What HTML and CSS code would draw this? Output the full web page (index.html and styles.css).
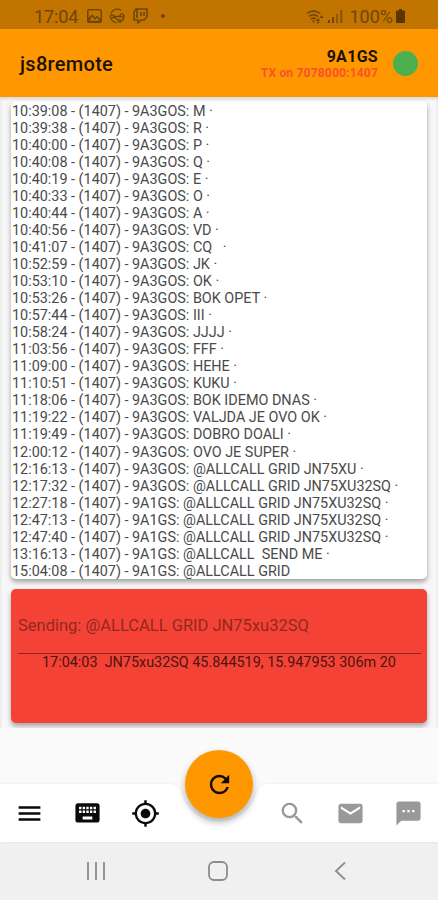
FILE: index.html
```
<!DOCTYPE html>
<html lang="en">
<head>
    <meta charset="UTF-8">
    <meta name="viewport" content="width=device-width, initial-scale=1.0">
    <title>js8remote</title>
    <link rel="stylesheet" href="styles.css">
</head>
<body>

    <!-- Status bar -->
    <div class="status">
        <span class="clock">17:04</span>
        <svg class="s-image" width="15" height="14" viewBox="0 0 16 15"><path fill="currentColor" fill-rule="evenodd" d="M2 0h12a2 2 0 0 1 2 2v11a2 2 0 0 1-2 2H2a2 2 0 0 1-2-2V2a2 2 0 0 1 2-2zM1.600 1.600v8l4-4 3 3.500 2-2 3.800 3.500v-9zM2.500 12.500h11l-3-3-2 2-3-3.500z"/></svg>
        <svg class="s-sync" width="16" height="16" viewBox="0 0 16 16" fill="none" stroke="currentColor" stroke-width="1.300"><path d="M2 5.500a6.500 6.500 0 0 1 10-3M14.800 7a6.500 6.500 0 0 1-4 7M7.500 14.500A6.500 6.500 0 0 1 2 11M5 8.500h6M5 9l5 3.500"/><circle cx="3" cy="8.500" r="1.700"/><circle cx="12.800" cy="7.500" r="1.700"/><circle cx="10.500" cy="13" r="1.200"/></svg>
        <svg class="s-twitch" width="15" height="16" viewBox="0 0 15 16" fill="none" stroke="currentColor" stroke-width="1.600"><path d="M3 1h11v8l-3 3H8l-3 3v-3H1V4zM4 1v9M8 4v4M11 4v4"/></svg>
        <span class="dot"></span>
        <svg class="s-wifi" width="18" height="15" viewBox="0 0 18 15" fill="none" stroke="currentColor" stroke-width="1.600"><path d="M1 4.500a10 10 0 0 1 13 0M3 7.500a7 7 0 0 1 9 0M5 10.200a4 4 0 0 1 5 0"/><path fill="currentColor" stroke="none" d="M6 11.500h3L7.500 14zM10 12l2-3 2 3zM13.500 9h4l-2-3zM10.500 12.500h3l-1.500 2.500z"/></svg>
        <svg class="s-signal" width="15" height="13" viewBox="0 0 15 13" fill="currentColor"><path d="M0 10h2v3H0zM4 7h2v6H4z"/><path opacity=".6" d="M8 4h2v9H8zM12 0h2.500v13H12z"/></svg>
        <span class="percent">100%</span>
        <svg class="s-battery" width="9" height="14" viewBox="0 0 9 14"><path fill="currentColor" d="M3 0h3v1.500h2a1 1 0 0 1 1 1V13a1 1 0 0 1-1 1H1a1 1 0 0 1-1-1V2.500a1 1 0 0 1 1-1h2z"/></svg>
    </div>

    <!-- App bar -->
    <header class="header">
        <h1 class="title">js8remote</h1>
        <div class="station">
            <div class="callsign">9A1GS</div>
            <div class="tx">TX on 7078000:1407</div>
        </div>
        <div class="online"></div>
    </header>

    <main class="content">
        <!-- Messages -->
        <div class="card log">
            <div>10:39:08 - (1407) - 9A3GOS: M ·</div>
            <div>10:39:38 - (1407) - 9A3GOS: R ·</div>
            <div>10:40:00 - (1407) - 9A3GOS: P ·</div>
            <div>10:40:08 - (1407) - 9A3GOS: Q ·</div>
            <div>10:40:19 - (1407) - 9A3GOS: E ·</div>
            <div>10:40:33 - (1407) - 9A3GOS: O ·</div>
            <div>10:40:44 - (1407) - 9A3GOS: A ·</div>
            <div>10:40:56 - (1407) - 9A3GOS: VD ·</div>
            <div>10:41:07 - (1407) - 9A3GOS: CQ   ·</div>
            <div>10:52:59 - (1407) - 9A3GOS: JK ·</div>
            <div>10:53:10 - (1407) - 9A3GOS: OK ·</div>
            <div>10:53:26 - (1407) - 9A3GOS: BOK OPET ·</div>
            <div>10:57:44 - (1407) - 9A3GOS: III ·</div>
            <div>10:58:24 - (1407) - 9A3GOS: JJJJ ·</div>
            <div>11:03:56 - (1407) - 9A3GOS: FFF ·</div>
            <div>11:09:00 - (1407) - 9A3GOS: HEHE ·</div>
            <div>11:10:51 - (1407) - 9A3GOS: KUKU ·</div>
            <div>11:18:06 - (1407) - 9A3GOS: BOK IDEMO DNAS ·</div>
            <div>11:19:22 - (1407) - 9A3GOS: VALJDA JE OVO OK ·</div>
            <div>11:19:49 - (1407) - 9A3GOS: DOBRO DOALI ·</div>
            <div>12:00:12 - (1407) - 9A3GOS: OVO JE SUPER ·</div>
            <div>12:16:13 - (1407) - 9A3GOS: @ALLCALL GRID JN75XU ·</div>
            <div>12:17:32 - (1407) - 9A3GOS: @ALLCALL GRID JN75XU32SQ ·</div>
            <div>12:27:18 - (1407) - 9A1GS: @ALLCALL GRID JN75XU32SQ ·</div>
            <div>12:47:13 - (1407) - 9A1GS: @ALLCALL GRID JN75XU32SQ ·</div>
            <div>12:47:40 - (1407) - 9A1GS: @ALLCALL GRID JN75XU32SQ ·</div>
            <div>13:16:13 - (1407) - 9A1GS: @ALLCALL  SEND ME ·</div>
            <div>15:04:08 - (1407) - 9A1GS: @ALLCALL GRID</div>
        </div>

        <!-- Outgoing message -->
        <div class="card sending">
            <div class="field">Sending: @ALLCALL GRID JN75xu32SQ</div>
            <div class="position">17:04:03  JN75xu32SQ 45.844519, 15.947953 306m 20</div>
        </div>
    </main>

    <!-- Bottom bar with a notch for the round button -->
    <nav class="bottom">
        <svg class="bar" width="438" height="58" viewBox="0 0 438 58"><path fill="#fff" d="M0 0H169C177 0 179 3 181.500 9A39 39 0 0 0 256.500 9C259 3 261 0 269 0H438V58H0z"/></svg>
        <div class="icons">
            <svg viewBox="0 0 24 24"><path d="M3 18h18v-2H3v2zm0-5h18v-2H3v2zm0-7v2h18V6H3z"/></svg>
            <svg viewBox="0 0 24 24"><path d="M20 3.500H4c-1.100 0-1.990.9-1.990 2L2 17.500c0 1.100.9 2 2 2h16c1.100 0 2-.9 2-2v-12c0-1.100-.9-2-2-2zm-9 3h2v2h-2v-2zm0 3h2v2h-2v-2zm-3-3h2v2H8v-2zm0 3h2v2H8v-2zm-1 2H5v-2h2v2zm0-3H5v-2h2v2zm9 8.500H8v-2.500h8v2.500zm0-5.500h-2v-2h2v2zm0-3h-2v-2h2v2zm3 3h-2v-2h2v2zm0-3h-2v-2h2v2z"/></svg>
            <svg viewBox="0 0 24 24"><path d="M12 8c-2.210 0-4 1.790-4 4s1.790 4 4 4 4-1.790 4-4-1.790-4-4-4zm8.940 3A8.994 8.994 0 0 0 13 3.060V1h-2v2.060A8.994 8.994 0 0 0 3.060 11H1v2h2.060A8.994 8.994 0 0 0 11 20.940V23h2v-2.060A8.994 8.994 0 0 0 20.940 13H23v-2h-2.060zM12 19c-3.870 0-7-3.130-7-7s3.130-7 7-7 7 3.130 7 7-3.130 7-7 7z"/></svg>
            <span class="space"></span>
            <svg class="off" viewBox="0 0 24 24"><path d="M15.500 14h-.79l-.28-.27A6.471 6.471 0 0 0 16 9.500 6.500 6.500 0 1 0 9.500 16c1.610 0 3.090-.59 4.230-1.570l.27.28v.79l5 4.990L20.490 19l-4.990-5zm-6 0C7.010 14 5 11.990 5 9.500S7.010 5 9.500 5 14 7.010 14 9.500 11.990 14 9.500 14z"/></svg>
            <svg class="off" viewBox="0 0 24 24"><path d="M20 4H4c-1.100 0-1.990.9-1.990 2L2 18c0 1.100.9 2 2 2h16c1.100 0 2-.9 2-2V6c0-1.100-.9-2-2-2zm0 4l-8 5-8-5V6l8 5 8-5v2z"/></svg>
            <svg class="off" viewBox="0 0 24 24"><path d="M20 2H4c-1.100 0-1.990.9-1.990 2L2 22l4-4h14c1.100 0 2-.9 2-2V4c0-1.100-.9-2-2-2zM9 11H7V9h2v2zm4 0h-2V9h2v2zm4 0h-2V9h2v2z"/></svg>
        </div>
        <button class="refresh" aria-label="Refresh">
            <svg viewBox="0 0 24 24"><path d="M17.650 6.350A7.958 7.958 0 0 0 12 4c-4.420 0-7.990 3.580-7.990 8s3.570 8 7.990 8c3.730 0 6.840-2.550 7.730-6h-2.080A5.990 5.990 0 0 1 12 18c-3.310 0-6-2.690-6-6s2.690-6 6-6c1.660 0 3.140.69 4.220 1.780L13 11h7V4l-2.350 2.350z"/></svg>
        </button>
    </nav>

    <!-- System navigation -->
    <div class="system">
        <svg width="20" height="20" viewBox="0 0 20 20"><path d="M2 1v18M10 1v18M18 1v18"/></svg>
        <svg width="20" height="20" viewBox="0 0 20 20"><rect x="1" y="1" width="18" height="18" rx="5"/></svg>
        <svg width="20" height="20" viewBox="0 0 20 20"><path d="M15 1.500L6 10l9 8.500"/></svg>
    </div>

</body>
</html>
```
FILE: styles.css
```
* {
    box-sizing: border-box;
}

body {
    margin: 0;
    width: 438px;
    height: 900px;
    display: flex;
    flex-direction: column;
    overflow: hidden;
    font-family: Roboto, sans-serif;
    background-color: #fafafa;
}

svg {
    display: block;
    flex: none;
}

.status {
    height: 29px;
    flex: none;
    display: flex;
    align-items: center;
    padding: 3px 33px 0 34px;
    background-color: #c27400;
    color: #704509;
    font-size: 18px;
}

.clock {
    width: 53px;
    letter-spacing: -0.1px;
}

.s-sync {
    margin-left: 7px;
}

.s-twitch {
    margin-left: 8px;
}

.dot {
    width: 4px;
    height: 4px;
    margin-left: 13px;
    border-radius: 50%;
    background-color: #704509;
}

.s-wifi {
    margin-left: auto;
}

.s-signal {
    margin-left: 4px;
}

.percent {
    margin-left: 6px;
}

.s-battery {
    margin-left: 3px;
    color: #5a3505;
}

.header {
    height: 68px;
    flex: none;
    display: flex;
    align-items: center;
    padding: 0 20px;
    background-color: #ff9800;
}

.title {
    margin: 0;
    padding-top: 1px;
    font-size: 20px;
    font-weight: 500;
    letter-spacing: 0.3px;
    color: #1c1203;
}

.station {
    margin-left: auto;
    padding-top: 2px;
    text-align: right;
    font-weight: bold;
}

.callsign {
    font-size: 16px;
    line-height: 18px;
    letter-spacing: 0.3px;
    color: #1c1203;
}

.tx {
    font-size: 12px;
    line-height: 14px;
    letter-spacing: 0.2px;
    color: #f9502a;
}

.online {
    width: 25px;
    height: 25px;
    margin-left: 15px;
    border-radius: 50%;
    background-color: #4caf50;
}

.content {
    height: 631px;
    flex: none;
    padding: 4px 11px 0;
    overflow: hidden;
    background-color: #f7f7f7;
    box-shadow: inset 0 2px 3px rgba(0, 0, 0, 0.12);
}

.card {
    border-radius: 5px;
    box-shadow: 0 3px 5px rgba(0, 0, 0, 0.35);
}

.log {
    height: 478px;
    padding: 1.6px 0 0 1px;
    background-color: #fff;
    font-size: 14.4px;
    line-height: 17.04px;
    color: #4a4a4a;
}

.log div {
    white-space: pre;
}

.sending {
    height: 134px;
    margin-top: 10px;
    padding: 22px 6px 0 7px;
    background-color: #f44336;
}

.field {
    height: 43px;
    padding-top: 5px;
    border-bottom: 1px solid #8d261e;
    font-size: 16.5px;
    line-height: 20px;
    color: #92281f;
}

.position {
    padding-left: 24px;
    font-size: 14.4px;
    line-height: 17px;
    color: #4c130f;
    white-space: pre;
}

.bottom {
    position: relative;
    height: 58px;
    margin-top: 56px;
    flex: none;
}

/* shape of the bar, behind the icons */
.bar {
    position: absolute;
    top: 0;
    left: 0;
    filter: drop-shadow(0 0 1px rgba(0, 0, 0, 0.08));
}

.icons {
    position: relative;
    height: 58px;
    display: grid;
    grid-template-columns: 58.400px 58.400px 58.400px 1fr 58.400px 58.400px 58.400px;
    align-items: center;
    justify-items: center;
}

.icons svg {
    width: 29px;
    height: 29px;
    fill: #0a0a0a;
}

.icons .off {
    fill: #999;
}

/* sits over the notch */
.refresh {
    position: absolute;
    left: 185px;
    top: -34px;
    width: 68px;
    height: 68px;
    display: flex;
    align-items: center;
    justify-content: center;
    padding: 0;
    border: none;
    border-radius: 50%;
    background-color: #ff9800;
    box-shadow: 0 4px 7px rgba(0, 0, 0, 0.3);
}

.refresh svg {
    width: 29px;
    height: 29px;
    fill: #0f0a02;
}

.system {
    height: 58px;
    flex: none;
    display: flex;
    justify-content: space-between;
    align-items: center;
    padding: 0 88px 0 86px;
    background-color: #f0f0f0;
}

.system svg {
    fill: none;
    stroke: #8c8c8c;
    stroke-width: 1.8;
}
```
